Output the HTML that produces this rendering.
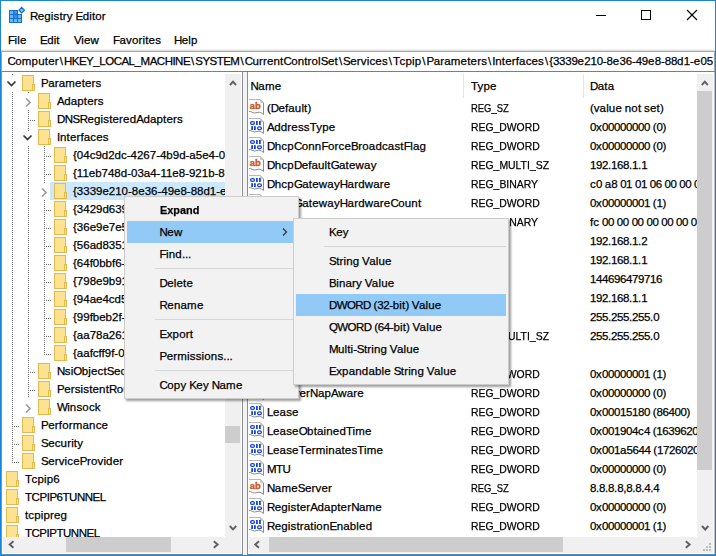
<!DOCTYPE html><html><head><meta charset="utf-8"><style>
html,body{margin:0;padding:0;background:#fff;}
#w{position:relative;width:716px;height:556px;overflow:hidden;background:#fff;font-family:"Liberation Sans",sans-serif;font-size:11.5px;color:#000;}
.t{position:absolute;white-space:nowrap;-webkit-text-stroke:0.25px #000;}
svg{position:absolute;left:0;top:0;}
</style></head><body><div id="w">
<div style="position:absolute;left:0px;top:0px;width:716px;height:1px;background:#1a84d8;"></div>
<div style="position:absolute;left:0px;top:0px;width:1px;height:556px;background:#1a84d8;"></div>
<div style="position:absolute;left:715px;top:0px;width:1px;height:556px;background:#1a84d8;"></div>
<div style="position:absolute;left:0px;top:555px;width:716px;height:1px;background:#1a84d8;"></div>
<svg width="30" height="30" style="left:0;top:0">
<path d="M9 10 H18 V14 H22 V23 H9 Z" fill="#1470d2"/>
<g fill="#6ab6f6">
<rect x="10" y="11" width="3" height="3"/><rect x="14" y="11" width="3" height="3" fill="#3d8ee0"/>
<rect x="10" y="15" width="3" height="3"/><rect x="14" y="15" width="3" height="3" fill="#3d8ee0"/><rect x="18" y="15" width="3" height="3"/>
<rect x="10" y="19" width="3" height="3"/><rect x="14" y="19" width="3" height="3"/><rect x="18" y="19" width="3" height="3"/>
</g>
<path d="M21.7 7.4 L24.5 10.2 L21.7 13 L18.9 10.2 Z" fill="#7cc0f8" stroke="#1466c8" stroke-width="1.1"/>
</svg>
<div class="t" style="left:30px;top:1px;height:30px;line-height:30px;"><span style="letter-spacing:-0.554px">R</span><span style="letter-spacing:0.150px">egistry</span><span style="letter-spacing:-0.407px"> </span><span style="letter-spacing:-0.512px">E</span><span style="letter-spacing:0.138px">ditor</span></div>
<svg width="716" height="31" style="left:0;top:0">
<line x1="596" y1="15.5" x2="606" y2="15.5" stroke="#000" stroke-width="1"/>
<rect x="641.5" y="10.5" width="9" height="9" fill="none" stroke="#000" stroke-width="1"/>
<path d="M687 10 L697 20 M697 10 L687 20" stroke="#000" stroke-width="1.1" fill="none"/>
</svg>
<div class="t" style="left:8px;top:31px;height:19px;line-height:19px;"><span style="letter-spacing:-0.469px">F</span><span style="letter-spacing:0.119px">ile</span></div>
<div class="t" style="left:40px;top:31px;height:19px;line-height:19px;"><span style="letter-spacing:-0.512px">E</span><span style="letter-spacing:0.125px">dit</span></div>
<div class="t" style="left:74px;top:31px;height:19px;line-height:19px;"><span style="letter-spacing:-0.512px">V</span><span style="letter-spacing:0.178px">iew</span></div>
<div class="t" style="left:113px;top:31px;height:19px;line-height:19px;"><span style="letter-spacing:-0.469px">F</span><span style="letter-spacing:0.156px">avorites</span></div>
<div class="t" style="left:174px;top:31px;height:19px;line-height:19px;"><span style="letter-spacing:-0.554px">H</span><span style="letter-spacing:0.158px">elp</span></div>
<div style="position:absolute;left:1px;top:49px;width:714px;height:1px;background:#f0f0f0;"></div>
<div style="position:absolute;left:1px;top:50px;width:714px;height:1px;background:#e3e3e3;"></div>
<div style="position:absolute;left:1px;top:51px;width:714px;height:21px;background:#fff;box-sizing:border-box;border:1px solid #a3a3a3;border-bottom-color:#7d7d7d;"></div>
<div class="t" style="left:7.5px;top:52px;height:19px;line-height:19px;width:705.5px;overflow:hidden;"><span style="letter-spacing:-0.554px">C</span><span style="letter-spacing:0.186px">omputer</span><span style="margin:0 1.009px">\</span><span style="letter-spacing:-0.522px">HKEY</span><span style="letter-spacing:-0.303px">_</span><span style="letter-spacing:-0.503px">LOCAL</span><span style="letter-spacing:-0.303px">_</span><span style="letter-spacing:-0.505px">MACHINE</span><span style="margin:0 1.009px">\</span><span style="letter-spacing:-0.526px">SYSTEM</span><span style="margin:0 1.009px">\</span><span style="letter-spacing:-0.554px">C</span><span style="letter-spacing:0.155px">urrent</span><span style="letter-spacing:-0.554px">C</span><span style="letter-spacing:0.148px">ontrol</span><span style="letter-spacing:-0.512px">S</span><span style="letter-spacing:0.148px">et</span><span style="margin:0 1.009px">\</span><span style="letter-spacing:-0.512px">S</span><span style="letter-spacing:0.161px">ervices</span><span style="margin:0 1.009px">\</span><span style="letter-spacing:-0.469px">T</span><span style="letter-spacing:0.163px">cpip</span><span style="margin:0 1.009px">\</span><span style="letter-spacing:-0.512px">P</span><span style="letter-spacing:0.178px">arameters</span><span style="margin:0 1.009px">\</span><span style="letter-spacing:-0.213px">I</span><span style="letter-spacing:0.162px">nterfaces</span><span style="margin:0 1.009px">\</span><span style="letter-spacing:-0.182px">{</span><span style="letter-spacing:-0.237px">3339</span><span style="letter-spacing:0.358px">e</span><span style="letter-spacing:-0.237px">210</span><span style="letter-spacing:-0.022px">-</span><span style="letter-spacing:-0.237px">8</span><span style="letter-spacing:0.358px">e</span><span style="letter-spacing:-0.237px">36</span><span style="letter-spacing:-0.022px">-</span><span style="letter-spacing:-0.237px">49</span><span style="letter-spacing:0.358px">e</span><span style="letter-spacing:-0.237px">8</span><span style="letter-spacing:-0.022px">-</span><span style="letter-spacing:-0.237px">88</span><span style="letter-spacing:0.358px">d</span><span style="letter-spacing:-0.237px">1</span><span style="letter-spacing:-0.022px">-</span><span style="letter-spacing:0.358px">e</span><span style="letter-spacing:-0.237px">05</span><span style="letter-spacing:0.358px">a</span><span style="letter-spacing:-0.237px">6</span><span style="letter-spacing:0.358px">b</span><span style="letter-spacing:-0.237px">7</span><span style="letter-spacing:0.338px">c</span><span style="letter-spacing:-0.237px">8</span><span style="letter-spacing:0.358px">d</span><span style="letter-spacing:-0.237px">9</span><span style="letter-spacing:0.358px">e</span><span style="letter-spacing:-0.022px">}</span></div>
<div style="position:absolute;left:1px;top:72px;width:1px;height:482px;background:#8b8e96;"></div>
<div style="position:absolute;left:242px;top:72px;width:1px;height:482px;background:#8b8e96;"></div>
<div style="position:absolute;left:1px;top:554px;width:242px;height:1px;background:#5a88b8;"></div>
<div style="position:absolute;left:243px;top:72px;width:4px;height:483px;background:#f3f3f3;"></div>
<div style="position:absolute;left:247px;top:72px;width:1px;height:482px;background:#8b8e96;"></div>
<div style="position:absolute;left:714px;top:72px;width:1px;height:482px;background:#b9bcc2;"></div>
<div style="position:absolute;left:247px;top:554px;width:468px;height:1px;background:#5a88b8;"></div>
<div style="position:absolute;left:3px;top:74px;width:222px;height:463px;overflow:hidden;background:#fff">
<div style="position:absolute;left:47px;top:108px;width:300px;height:18px;background:#cce8ff"></div>
<svg width="223" height="464" style="left:0;top:0"><g fill="#707070"><rect x="9" y="0" width="1" height="1"/><rect x="9" y="18" width="1" height="1"/><rect x="9" y="20" width="1" height="1"/><rect x="9" y="22" width="1" height="1"/><rect x="9" y="24" width="1" height="1"/><rect x="9" y="26" width="1" height="1"/><rect x="9" y="28" width="1" height="1"/><rect x="9" y="30" width="1" height="1"/><rect x="9" y="32" width="1" height="1"/><rect x="9" y="34" width="1" height="1"/><rect x="9" y="36" width="1" height="1"/><rect x="9" y="38" width="1" height="1"/><rect x="9" y="40" width="1" height="1"/><rect x="9" y="42" width="1" height="1"/><rect x="9" y="44" width="1" height="1"/><rect x="9" y="46" width="1" height="1"/><rect x="9" y="48" width="1" height="1"/><rect x="9" y="50" width="1" height="1"/><rect x="9" y="52" width="1" height="1"/><rect x="9" y="54" width="1" height="1"/><rect x="9" y="56" width="1" height="1"/><rect x="9" y="58" width="1" height="1"/><rect x="9" y="60" width="1" height="1"/><rect x="9" y="62" width="1" height="1"/><rect x="9" y="64" width="1" height="1"/><rect x="9" y="66" width="1" height="1"/><rect x="9" y="68" width="1" height="1"/><rect x="9" y="70" width="1" height="1"/><rect x="9" y="72" width="1" height="1"/><rect x="9" y="74" width="1" height="1"/><rect x="9" y="76" width="1" height="1"/><rect x="9" y="78" width="1" height="1"/><rect x="9" y="80" width="1" height="1"/><rect x="9" y="82" width="1" height="1"/><rect x="9" y="84" width="1" height="1"/><rect x="9" y="86" width="1" height="1"/><rect x="9" y="88" width="1" height="1"/><rect x="9" y="90" width="1" height="1"/><rect x="9" y="92" width="1" height="1"/><rect x="9" y="94" width="1" height="1"/><rect x="9" y="96" width="1" height="1"/><rect x="9" y="98" width="1" height="1"/><rect x="9" y="100" width="1" height="1"/><rect x="9" y="102" width="1" height="1"/><rect x="9" y="104" width="1" height="1"/><rect x="9" y="106" width="1" height="1"/><rect x="9" y="108" width="1" height="1"/><rect x="9" y="110" width="1" height="1"/><rect x="9" y="112" width="1" height="1"/><rect x="9" y="114" width="1" height="1"/><rect x="9" y="116" width="1" height="1"/><rect x="9" y="118" width="1" height="1"/><rect x="9" y="120" width="1" height="1"/><rect x="9" y="122" width="1" height="1"/><rect x="9" y="124" width="1" height="1"/><rect x="9" y="126" width="1" height="1"/><rect x="9" y="128" width="1" height="1"/><rect x="9" y="130" width="1" height="1"/><rect x="9" y="132" width="1" height="1"/><rect x="9" y="134" width="1" height="1"/><rect x="9" y="136" width="1" height="1"/><rect x="9" y="138" width="1" height="1"/><rect x="9" y="140" width="1" height="1"/><rect x="9" y="142" width="1" height="1"/><rect x="9" y="144" width="1" height="1"/><rect x="9" y="146" width="1" height="1"/><rect x="9" y="148" width="1" height="1"/><rect x="9" y="150" width="1" height="1"/><rect x="9" y="152" width="1" height="1"/><rect x="9" y="154" width="1" height="1"/><rect x="9" y="156" width="1" height="1"/><rect x="9" y="158" width="1" height="1"/><rect x="9" y="160" width="1" height="1"/><rect x="9" y="162" width="1" height="1"/><rect x="9" y="164" width="1" height="1"/><rect x="9" y="166" width="1" height="1"/><rect x="9" y="168" width="1" height="1"/><rect x="9" y="170" width="1" height="1"/><rect x="9" y="172" width="1" height="1"/><rect x="9" y="174" width="1" height="1"/><rect x="9" y="176" width="1" height="1"/><rect x="9" y="178" width="1" height="1"/><rect x="9" y="180" width="1" height="1"/><rect x="9" y="182" width="1" height="1"/><rect x="9" y="184" width="1" height="1"/><rect x="9" y="186" width="1" height="1"/><rect x="9" y="188" width="1" height="1"/><rect x="9" y="190" width="1" height="1"/><rect x="9" y="192" width="1" height="1"/><rect x="9" y="194" width="1" height="1"/><rect x="9" y="196" width="1" height="1"/><rect x="9" y="198" width="1" height="1"/><rect x="9" y="200" width="1" height="1"/><rect x="9" y="202" width="1" height="1"/><rect x="9" y="204" width="1" height="1"/><rect x="9" y="206" width="1" height="1"/><rect x="9" y="208" width="1" height="1"/><rect x="9" y="210" width="1" height="1"/><rect x="9" y="212" width="1" height="1"/><rect x="9" y="214" width="1" height="1"/><rect x="9" y="216" width="1" height="1"/><rect x="9" y="218" width="1" height="1"/><rect x="9" y="220" width="1" height="1"/><rect x="9" y="222" width="1" height="1"/><rect x="9" y="224" width="1" height="1"/><rect x="9" y="226" width="1" height="1"/><rect x="9" y="228" width="1" height="1"/><rect x="9" y="230" width="1" height="1"/><rect x="9" y="232" width="1" height="1"/><rect x="9" y="234" width="1" height="1"/><rect x="9" y="236" width="1" height="1"/><rect x="9" y="238" width="1" height="1"/><rect x="9" y="240" width="1" height="1"/><rect x="9" y="242" width="1" height="1"/><rect x="9" y="244" width="1" height="1"/><rect x="9" y="246" width="1" height="1"/><rect x="9" y="248" width="1" height="1"/><rect x="9" y="250" width="1" height="1"/><rect x="9" y="252" width="1" height="1"/><rect x="9" y="254" width="1" height="1"/><rect x="9" y="256" width="1" height="1"/><rect x="9" y="258" width="1" height="1"/><rect x="9" y="260" width="1" height="1"/><rect x="9" y="262" width="1" height="1"/><rect x="9" y="264" width="1" height="1"/><rect x="9" y="266" width="1" height="1"/><rect x="9" y="268" width="1" height="1"/><rect x="9" y="270" width="1" height="1"/><rect x="9" y="272" width="1" height="1"/><rect x="9" y="274" width="1" height="1"/><rect x="9" y="276" width="1" height="1"/><rect x="9" y="278" width="1" height="1"/><rect x="9" y="280" width="1" height="1"/><rect x="9" y="282" width="1" height="1"/><rect x="9" y="284" width="1" height="1"/><rect x="9" y="286" width="1" height="1"/><rect x="9" y="288" width="1" height="1"/><rect x="9" y="290" width="1" height="1"/><rect x="9" y="292" width="1" height="1"/><rect x="9" y="294" width="1" height="1"/><rect x="9" y="296" width="1" height="1"/><rect x="9" y="298" width="1" height="1"/><rect x="9" y="300" width="1" height="1"/><rect x="9" y="302" width="1" height="1"/><rect x="9" y="304" width="1" height="1"/><rect x="9" y="306" width="1" height="1"/><rect x="9" y="308" width="1" height="1"/><rect x="9" y="310" width="1" height="1"/><rect x="9" y="312" width="1" height="1"/><rect x="9" y="314" width="1" height="1"/><rect x="9" y="316" width="1" height="1"/><rect x="9" y="318" width="1" height="1"/><rect x="9" y="320" width="1" height="1"/><rect x="9" y="322" width="1" height="1"/><rect x="9" y="324" width="1" height="1"/><rect x="9" y="326" width="1" height="1"/><rect x="9" y="328" width="1" height="1"/><rect x="9" y="330" width="1" height="1"/><rect x="9" y="332" width="1" height="1"/><rect x="9" y="334" width="1" height="1"/><rect x="9" y="336" width="1" height="1"/><rect x="9" y="338" width="1" height="1"/><rect x="9" y="340" width="1" height="1"/><rect x="9" y="342" width="1" height="1"/><rect x="9" y="344" width="1" height="1"/><rect x="9" y="346" width="1" height="1"/><rect x="9" y="348" width="1" height="1"/><rect x="9" y="350" width="1" height="1"/><rect x="9" y="352" width="1" height="1"/><rect x="9" y="354" width="1" height="1"/><rect x="9" y="356" width="1" height="1"/><rect x="9" y="358" width="1" height="1"/><rect x="9" y="360" width="1" height="1"/><rect x="9" y="362" width="1" height="1"/><rect x="9" y="364" width="1" height="1"/><rect x="9" y="366" width="1" height="1"/><rect x="9" y="368" width="1" height="1"/><rect x="9" y="370" width="1" height="1"/><rect x="9" y="372" width="1" height="1"/><rect x="9" y="374" width="1" height="1"/><rect x="9" y="376" width="1" height="1"/><rect x="9" y="378" width="1" height="1"/><rect x="9" y="380" width="1" height="1"/><rect x="9" y="382" width="1" height="1"/><rect x="9" y="384" width="1" height="1"/><rect x="9" y="386" width="1" height="1"/><rect x="25" y="18" width="1" height="1"/><rect x="25" y="36" width="1" height="1"/><rect x="25" y="38" width="1" height="1"/><rect x="25" y="40" width="1" height="1"/><rect x="25" y="42" width="1" height="1"/><rect x="25" y="44" width="1" height="1"/><rect x="25" y="46" width="1" height="1"/><rect x="25" y="48" width="1" height="1"/><rect x="25" y="50" width="1" height="1"/><rect x="25" y="52" width="1" height="1"/><rect x="25" y="54" width="1" height="1"/><rect x="25" y="56" width="1" height="1"/><rect x="25" y="72" width="1" height="1"/><rect x="25" y="74" width="1" height="1"/><rect x="25" y="76" width="1" height="1"/><rect x="25" y="78" width="1" height="1"/><rect x="25" y="80" width="1" height="1"/><rect x="25" y="82" width="1" height="1"/><rect x="25" y="84" width="1" height="1"/><rect x="25" y="86" width="1" height="1"/><rect x="25" y="88" width="1" height="1"/><rect x="25" y="90" width="1" height="1"/><rect x="25" y="92" width="1" height="1"/><rect x="25" y="94" width="1" height="1"/><rect x="25" y="96" width="1" height="1"/><rect x="25" y="98" width="1" height="1"/><rect x="25" y="100" width="1" height="1"/><rect x="25" y="102" width="1" height="1"/><rect x="25" y="104" width="1" height="1"/><rect x="25" y="106" width="1" height="1"/><rect x="25" y="108" width="1" height="1"/><rect x="25" y="110" width="1" height="1"/><rect x="25" y="112" width="1" height="1"/><rect x="25" y="114" width="1" height="1"/><rect x="25" y="116" width="1" height="1"/><rect x="25" y="118" width="1" height="1"/><rect x="25" y="120" width="1" height="1"/><rect x="25" y="122" width="1" height="1"/><rect x="25" y="124" width="1" height="1"/><rect x="25" y="126" width="1" height="1"/><rect x="25" y="128" width="1" height="1"/><rect x="25" y="130" width="1" height="1"/><rect x="25" y="132" width="1" height="1"/><rect x="25" y="134" width="1" height="1"/><rect x="25" y="136" width="1" height="1"/><rect x="25" y="138" width="1" height="1"/><rect x="25" y="140" width="1" height="1"/><rect x="25" y="142" width="1" height="1"/><rect x="25" y="144" width="1" height="1"/><rect x="25" y="146" width="1" height="1"/><rect x="25" y="148" width="1" height="1"/><rect x="25" y="150" width="1" height="1"/><rect x="25" y="152" width="1" height="1"/><rect x="25" y="154" width="1" height="1"/><rect x="25" y="156" width="1" height="1"/><rect x="25" y="158" width="1" height="1"/><rect x="25" y="160" width="1" height="1"/><rect x="25" y="162" width="1" height="1"/><rect x="25" y="164" width="1" height="1"/><rect x="25" y="166" width="1" height="1"/><rect x="25" y="168" width="1" height="1"/><rect x="25" y="170" width="1" height="1"/><rect x="25" y="172" width="1" height="1"/><rect x="25" y="174" width="1" height="1"/><rect x="25" y="176" width="1" height="1"/><rect x="25" y="178" width="1" height="1"/><rect x="25" y="180" width="1" height="1"/><rect x="25" y="182" width="1" height="1"/><rect x="25" y="184" width="1" height="1"/><rect x="25" y="186" width="1" height="1"/><rect x="25" y="188" width="1" height="1"/><rect x="25" y="190" width="1" height="1"/><rect x="25" y="192" width="1" height="1"/><rect x="25" y="194" width="1" height="1"/><rect x="25" y="196" width="1" height="1"/><rect x="25" y="198" width="1" height="1"/><rect x="25" y="200" width="1" height="1"/><rect x="25" y="202" width="1" height="1"/><rect x="25" y="204" width="1" height="1"/><rect x="25" y="206" width="1" height="1"/><rect x="25" y="208" width="1" height="1"/><rect x="25" y="210" width="1" height="1"/><rect x="25" y="212" width="1" height="1"/><rect x="25" y="214" width="1" height="1"/><rect x="25" y="216" width="1" height="1"/><rect x="25" y="218" width="1" height="1"/><rect x="25" y="220" width="1" height="1"/><rect x="25" y="222" width="1" height="1"/><rect x="25" y="224" width="1" height="1"/><rect x="25" y="226" width="1" height="1"/><rect x="25" y="228" width="1" height="1"/><rect x="25" y="230" width="1" height="1"/><rect x="25" y="232" width="1" height="1"/><rect x="25" y="234" width="1" height="1"/><rect x="25" y="236" width="1" height="1"/><rect x="25" y="238" width="1" height="1"/><rect x="25" y="240" width="1" height="1"/><rect x="25" y="242" width="1" height="1"/><rect x="25" y="244" width="1" height="1"/><rect x="25" y="246" width="1" height="1"/><rect x="25" y="248" width="1" height="1"/><rect x="25" y="250" width="1" height="1"/><rect x="25" y="252" width="1" height="1"/><rect x="25" y="254" width="1" height="1"/><rect x="25" y="256" width="1" height="1"/><rect x="25" y="258" width="1" height="1"/><rect x="25" y="260" width="1" height="1"/><rect x="25" y="262" width="1" height="1"/><rect x="25" y="264" width="1" height="1"/><rect x="25" y="266" width="1" height="1"/><rect x="25" y="268" width="1" height="1"/><rect x="25" y="270" width="1" height="1"/><rect x="25" y="272" width="1" height="1"/><rect x="25" y="274" width="1" height="1"/><rect x="25" y="276" width="1" height="1"/><rect x="25" y="278" width="1" height="1"/><rect x="25" y="280" width="1" height="1"/><rect x="25" y="282" width="1" height="1"/><rect x="25" y="284" width="1" height="1"/><rect x="25" y="286" width="1" height="1"/><rect x="25" y="288" width="1" height="1"/><rect x="25" y="290" width="1" height="1"/><rect x="25" y="292" width="1" height="1"/><rect x="25" y="294" width="1" height="1"/><rect x="25" y="296" width="1" height="1"/><rect x="25" y="298" width="1" height="1"/><rect x="25" y="300" width="1" height="1"/><rect x="25" y="302" width="1" height="1"/><rect x="25" y="304" width="1" height="1"/><rect x="25" y="306" width="1" height="1"/><rect x="25" y="308" width="1" height="1"/><rect x="25" y="310" width="1" height="1"/><rect x="25" y="312" width="1" height="1"/><rect x="25" y="314" width="1" height="1"/><rect x="25" y="316" width="1" height="1"/><rect x="25" y="318" width="1" height="1"/><rect x="25" y="320" width="1" height="1"/><rect x="25" y="322" width="1" height="1"/><rect x="41" y="72" width="1" height="1"/><rect x="41" y="74" width="1" height="1"/><rect x="41" y="76" width="1" height="1"/><rect x="41" y="78" width="1" height="1"/><rect x="41" y="80" width="1" height="1"/><rect x="41" y="82" width="1" height="1"/><rect x="41" y="84" width="1" height="1"/><rect x="41" y="86" width="1" height="1"/><rect x="41" y="88" width="1" height="1"/><rect x="41" y="90" width="1" height="1"/><rect x="41" y="92" width="1" height="1"/><rect x="41" y="94" width="1" height="1"/><rect x="41" y="96" width="1" height="1"/><rect x="41" y="98" width="1" height="1"/><rect x="41" y="100" width="1" height="1"/><rect x="41" y="102" width="1" height="1"/><rect x="41" y="104" width="1" height="1"/><rect x="41" y="106" width="1" height="1"/><rect x="41" y="108" width="1" height="1"/><rect x="41" y="126" width="1" height="1"/><rect x="41" y="128" width="1" height="1"/><rect x="41" y="130" width="1" height="1"/><rect x="41" y="132" width="1" height="1"/><rect x="41" y="134" width="1" height="1"/><rect x="41" y="136" width="1" height="1"/><rect x="41" y="138" width="1" height="1"/><rect x="41" y="140" width="1" height="1"/><rect x="41" y="142" width="1" height="1"/><rect x="41" y="144" width="1" height="1"/><rect x="41" y="146" width="1" height="1"/><rect x="41" y="148" width="1" height="1"/><rect x="41" y="150" width="1" height="1"/><rect x="41" y="152" width="1" height="1"/><rect x="41" y="154" width="1" height="1"/><rect x="41" y="156" width="1" height="1"/><rect x="41" y="158" width="1" height="1"/><rect x="41" y="160" width="1" height="1"/><rect x="41" y="162" width="1" height="1"/><rect x="41" y="164" width="1" height="1"/><rect x="41" y="166" width="1" height="1"/><rect x="41" y="168" width="1" height="1"/><rect x="41" y="170" width="1" height="1"/><rect x="41" y="172" width="1" height="1"/><rect x="41" y="174" width="1" height="1"/><rect x="41" y="176" width="1" height="1"/><rect x="41" y="178" width="1" height="1"/><rect x="41" y="180" width="1" height="1"/><rect x="41" y="182" width="1" height="1"/><rect x="41" y="184" width="1" height="1"/><rect x="41" y="186" width="1" height="1"/><rect x="41" y="188" width="1" height="1"/><rect x="41" y="190" width="1" height="1"/><rect x="41" y="192" width="1" height="1"/><rect x="41" y="194" width="1" height="1"/><rect x="41" y="196" width="1" height="1"/><rect x="41" y="198" width="1" height="1"/><rect x="41" y="200" width="1" height="1"/><rect x="41" y="202" width="1" height="1"/><rect x="41" y="204" width="1" height="1"/><rect x="41" y="206" width="1" height="1"/><rect x="41" y="208" width="1" height="1"/><rect x="41" y="210" width="1" height="1"/><rect x="41" y="212" width="1" height="1"/><rect x="41" y="214" width="1" height="1"/><rect x="41" y="216" width="1" height="1"/><rect x="41" y="218" width="1" height="1"/><rect x="41" y="220" width="1" height="1"/><rect x="41" y="222" width="1" height="1"/><rect x="41" y="224" width="1" height="1"/><rect x="41" y="226" width="1" height="1"/><rect x="41" y="228" width="1" height="1"/><rect x="41" y="230" width="1" height="1"/><rect x="41" y="232" width="1" height="1"/><rect x="41" y="234" width="1" height="1"/><rect x="41" y="236" width="1" height="1"/><rect x="41" y="238" width="1" height="1"/><rect x="41" y="240" width="1" height="1"/><rect x="41" y="242" width="1" height="1"/><rect x="41" y="244" width="1" height="1"/><rect x="41" y="246" width="1" height="1"/><rect x="41" y="248" width="1" height="1"/><rect x="41" y="250" width="1" height="1"/><rect x="41" y="252" width="1" height="1"/><rect x="41" y="254" width="1" height="1"/><rect x="41" y="256" width="1" height="1"/><rect x="41" y="258" width="1" height="1"/><rect x="41" y="260" width="1" height="1"/><rect x="41" y="262" width="1" height="1"/><rect x="41" y="264" width="1" height="1"/><rect x="41" y="266" width="1" height="1"/><rect x="41" y="268" width="1" height="1"/><rect x="41" y="270" width="1" height="1"/><rect x="41" y="272" width="1" height="1"/><rect x="41" y="274" width="1" height="1"/><rect x="41" y="276" width="1" height="1"/><rect x="41" y="278" width="1" height="1"/><rect x="25" y="46" width="1" height="1"/><rect x="27" y="46" width="1" height="1"/><rect x="29" y="46" width="1" height="1"/><rect x="31" y="46" width="1" height="1"/><rect x="41" y="82" width="1" height="1"/><rect x="43" y="82" width="1" height="1"/><rect x="45" y="82" width="1" height="1"/><rect x="47" y="82" width="1" height="1"/><rect x="41" y="100" width="1" height="1"/><rect x="43" y="100" width="1" height="1"/><rect x="45" y="100" width="1" height="1"/><rect x="47" y="100" width="1" height="1"/><rect x="41" y="136" width="1" height="1"/><rect x="43" y="136" width="1" height="1"/><rect x="45" y="136" width="1" height="1"/><rect x="47" y="136" width="1" height="1"/><rect x="41" y="154" width="1" height="1"/><rect x="43" y="154" width="1" height="1"/><rect x="45" y="154" width="1" height="1"/><rect x="47" y="154" width="1" height="1"/><rect x="41" y="172" width="1" height="1"/><rect x="43" y="172" width="1" height="1"/><rect x="45" y="172" width="1" height="1"/><rect x="47" y="172" width="1" height="1"/><rect x="41" y="190" width="1" height="1"/><rect x="43" y="190" width="1" height="1"/><rect x="45" y="190" width="1" height="1"/><rect x="47" y="190" width="1" height="1"/><rect x="41" y="208" width="1" height="1"/><rect x="43" y="208" width="1" height="1"/><rect x="45" y="208" width="1" height="1"/><rect x="47" y="208" width="1" height="1"/><rect x="41" y="226" width="1" height="1"/><rect x="43" y="226" width="1" height="1"/><rect x="45" y="226" width="1" height="1"/><rect x="47" y="226" width="1" height="1"/><rect x="41" y="244" width="1" height="1"/><rect x="43" y="244" width="1" height="1"/><rect x="45" y="244" width="1" height="1"/><rect x="47" y="244" width="1" height="1"/><rect x="41" y="262" width="1" height="1"/><rect x="43" y="262" width="1" height="1"/><rect x="45" y="262" width="1" height="1"/><rect x="47" y="262" width="1" height="1"/><rect x="41" y="280" width="1" height="1"/><rect x="43" y="280" width="1" height="1"/><rect x="45" y="280" width="1" height="1"/><rect x="47" y="280" width="1" height="1"/><rect x="25" y="298" width="1" height="1"/><rect x="27" y="298" width="1" height="1"/><rect x="29" y="298" width="1" height="1"/><rect x="31" y="298" width="1" height="1"/><rect x="25" y="316" width="1" height="1"/><rect x="27" y="316" width="1" height="1"/><rect x="29" y="316" width="1" height="1"/><rect x="31" y="316" width="1" height="1"/><rect x="9" y="352" width="1" height="1"/><rect x="11" y="352" width="1" height="1"/><rect x="13" y="352" width="1" height="1"/><rect x="15" y="352" width="1" height="1"/><rect x="9" y="370" width="1" height="1"/><rect x="11" y="370" width="1" height="1"/><rect x="13" y="370" width="1" height="1"/><rect x="15" y="370" width="1" height="1"/><rect x="9" y="388" width="1" height="1"/><rect x="11" y="388" width="1" height="1"/><rect x="13" y="388" width="1" height="1"/><rect x="15" y="388" width="1" height="1"/></g><rect x="19.5" y="1.5" width="11" height="15" fill="#fce391" stroke="#e4bb4a"/><rect x="29.5" y="10.5" width="2" height="6" fill="#fce391" stroke="#e4bb4a"/><path d="M4.5 7.5 L8.5 11.5 L12.5 7.5" fill="none" stroke="#3a3a3a" stroke-width="1.75"/><rect x="35.5" y="19.5" width="11" height="15" fill="#fce391" stroke="#e4bb4a"/><rect x="45.5" y="28.5" width="2" height="6" fill="#fce391" stroke="#e4bb4a"/><path d="M23.0 24.5 L27.0 28.5 L23.0 32.5" fill="none" stroke="#9c9c9c" stroke-width="1.75"/><rect x="35.5" y="37.5" width="11" height="15" fill="#fce391" stroke="#e4bb4a"/><rect x="45.5" y="46.5" width="2" height="6" fill="#fce391" stroke="#e4bb4a"/><rect x="35.5" y="55.5" width="11" height="15" fill="#fce391" stroke="#e4bb4a"/><rect x="45.5" y="64.5" width="2" height="6" fill="#fce391" stroke="#e4bb4a"/><path d="M20.5 61.5 L24.5 65.5 L28.5 61.5" fill="none" stroke="#3a3a3a" stroke-width="1.75"/><rect x="51.5" y="73.5" width="11" height="15" fill="#fce391" stroke="#e4bb4a"/><rect x="61.5" y="82.5" width="2" height="6" fill="#fce391" stroke="#e4bb4a"/><rect x="51.5" y="91.5" width="11" height="15" fill="#fce391" stroke="#e4bb4a"/><rect x="61.5" y="100.5" width="2" height="6" fill="#fce391" stroke="#e4bb4a"/><rect x="51.5" y="109.5" width="11" height="15" fill="#fce391" stroke="#e4bb4a"/><rect x="61.5" y="118.5" width="2" height="6" fill="#fce391" stroke="#e4bb4a"/><path d="M39.0 114.5 L43.0 118.5 L39.0 122.5" fill="none" stroke="#9c9c9c" stroke-width="1.75"/><rect x="51.5" y="127.5" width="11" height="15" fill="#fce391" stroke="#e4bb4a"/><rect x="61.5" y="136.5" width="2" height="6" fill="#fce391" stroke="#e4bb4a"/><rect x="51.5" y="145.5" width="11" height="15" fill="#fce391" stroke="#e4bb4a"/><rect x="61.5" y="154.5" width="2" height="6" fill="#fce391" stroke="#e4bb4a"/><rect x="51.5" y="163.5" width="11" height="15" fill="#fce391" stroke="#e4bb4a"/><rect x="61.5" y="172.5" width="2" height="6" fill="#fce391" stroke="#e4bb4a"/><rect x="51.5" y="181.5" width="11" height="15" fill="#fce391" stroke="#e4bb4a"/><rect x="61.5" y="190.5" width="2" height="6" fill="#fce391" stroke="#e4bb4a"/><rect x="51.5" y="199.5" width="11" height="15" fill="#fce391" stroke="#e4bb4a"/><rect x="61.5" y="208.5" width="2" height="6" fill="#fce391" stroke="#e4bb4a"/><rect x="51.5" y="217.5" width="11" height="15" fill="#fce391" stroke="#e4bb4a"/><rect x="61.5" y="226.5" width="2" height="6" fill="#fce391" stroke="#e4bb4a"/><rect x="51.5" y="235.5" width="11" height="15" fill="#fce391" stroke="#e4bb4a"/><rect x="61.5" y="244.5" width="2" height="6" fill="#fce391" stroke="#e4bb4a"/><rect x="51.5" y="253.5" width="11" height="15" fill="#fce391" stroke="#e4bb4a"/><rect x="61.5" y="262.5" width="2" height="6" fill="#fce391" stroke="#e4bb4a"/><rect x="51.5" y="271.5" width="11" height="15" fill="#fce391" stroke="#e4bb4a"/><rect x="61.5" y="280.5" width="2" height="6" fill="#fce391" stroke="#e4bb4a"/><rect x="35.5" y="289.5" width="11" height="15" fill="#fce391" stroke="#e4bb4a"/><rect x="45.5" y="298.5" width="2" height="6" fill="#fce391" stroke="#e4bb4a"/><rect x="35.5" y="307.5" width="11" height="15" fill="#fce391" stroke="#e4bb4a"/><rect x="45.5" y="316.5" width="2" height="6" fill="#fce391" stroke="#e4bb4a"/><rect x="35.5" y="325.5" width="11" height="15" fill="#fce391" stroke="#e4bb4a"/><rect x="45.5" y="334.5" width="2" height="6" fill="#fce391" stroke="#e4bb4a"/><path d="M23.0 330.5 L27.0 334.5 L23.0 338.5" fill="none" stroke="#9c9c9c" stroke-width="1.75"/><rect x="19.5" y="343.5" width="11" height="15" fill="#fce391" stroke="#e4bb4a"/><rect x="29.5" y="352.5" width="2" height="6" fill="#fce391" stroke="#e4bb4a"/><rect x="19.5" y="361.5" width="11" height="15" fill="#fce391" stroke="#e4bb4a"/><rect x="29.5" y="370.5" width="2" height="6" fill="#fce391" stroke="#e4bb4a"/><rect x="19.5" y="379.5" width="11" height="15" fill="#fce391" stroke="#e4bb4a"/><rect x="29.5" y="388.5" width="2" height="6" fill="#fce391" stroke="#e4bb4a"/><rect x="3.5" y="397.5" width="11" height="15" fill="#fce391" stroke="#e4bb4a"/><rect x="13.5" y="406.5" width="2" height="6" fill="#fce391" stroke="#e4bb4a"/><rect x="3.5" y="415.5" width="11" height="15" fill="#fce391" stroke="#e4bb4a"/><rect x="13.5" y="424.5" width="2" height="6" fill="#fce391" stroke="#e4bb4a"/><rect x="3.5" y="433.5" width="11" height="15" fill="#fce391" stroke="#e4bb4a"/><rect x="13.5" y="442.5" width="2" height="6" fill="#fce391" stroke="#e4bb4a"/><rect x="3.5" y="451.5" width="11" height="15" fill="#fce391" stroke="#e4bb4a"/><rect x="13.5" y="460.5" width="2" height="6" fill="#fce391" stroke="#e4bb4a"/></svg>
<div class="t" style="left:38px;top:0px;height:18px;line-height:18px"><span style="letter-spacing:-0.512px">P</span><span style="letter-spacing:0.178px">arameters</span></div>
<div class="t" style="left:54px;top:18px;height:18px;line-height:18px"><span style="letter-spacing:-0.512px">A</span><span style="letter-spacing:0.169px">dapters</span></div>
<div class="t" style="left:54px;top:36px;height:18px;line-height:18px"><span style="letter-spacing:-0.543px">DNSR</span><span style="letter-spacing:0.162px">egistered</span><span style="letter-spacing:-0.512px">A</span><span style="letter-spacing:0.169px">dapters</span></div>
<div class="t" style="left:54px;top:54px;height:18px;line-height:18px"><span style="letter-spacing:-0.213px">I</span><span style="letter-spacing:0.162px">nterfaces</span></div>
<div class="t" style="left:70px;top:72px;height:18px;line-height:18px">{04c9d2dc-4267-4b9d-a5e4-0a0b1c2d3e4f}</div>
<div class="t" style="left:70px;top:90px;height:18px;line-height:18px">{11eb748d-03a4-11e8-921b-806e6f6e6963}</div>
<div class="t" style="left:70px;top:108px;height:18px;line-height:18px">{3339e210-8e36-49e8-88d1-e05a6b7c8d9e}</div>
<div class="t" style="left:70px;top:126px;height:18px;line-height:18px">{3429d639-0000-0000-0000-000000000000}</div>
<div class="t" style="left:70px;top:144px;height:18px;line-height:18px">{36e9e7e5-0000-0000-0000-000000000000}</div>
<div class="t" style="left:70px;top:162px;height:18px;line-height:18px">{56ad8351-0000-0000-0000-000000000000}</div>
<div class="t" style="left:70px;top:180px;height:18px;line-height:18px">{64f0bbf6-0000-0000-0000-000000000000}</div>
<div class="t" style="left:70px;top:198px;height:18px;line-height:18px">{798e9b91-0000-0000-0000-000000000000}</div>
<div class="t" style="left:70px;top:216px;height:18px;line-height:18px">{94ae4cd5-0000-0000-0000-000000000000}</div>
<div class="t" style="left:70px;top:234px;height:18px;line-height:18px">{99fbeb2f-0000-0000-0000-000000000000}</div>
<div class="t" style="left:70px;top:252px;height:18px;line-height:18px">{aa78a261-0000-0000-0000-000000000000}</div>
<div class="t" style="left:70px;top:270px;height:18px;line-height:18px">{aafcff9f-0000-0000-0000-000000000000}</div>
<div class="t" style="left:54px;top:288px;height:18px;line-height:18px"><span style="letter-spacing:-0.554px">N</span><span style="letter-spacing:0.128px">si</span><span style="letter-spacing:-0.597px">O</span><span style="letter-spacing:0.150px">bject</span><span style="letter-spacing:-0.512px">S</span><span style="letter-spacing:0.150px">ecurity</span></div>
<div class="t" style="left:54px;top:306px;height:18px;line-height:18px"><span style="letter-spacing:-0.512px">P</span><span style="letter-spacing:0.149px">ersistent</span><span style="letter-spacing:-0.554px">R</span><span style="letter-spacing:0.174px">outes</span></div>
<div class="t" style="left:54px;top:324px;height:18px;line-height:18px"><span style="letter-spacing:-0.724px">W</span><span style="letter-spacing:0.168px">insock</span></div>
<div class="t" style="left:38px;top:342px;height:18px;line-height:18px"><span style="letter-spacing:-0.512px">P</span><span style="letter-spacing:0.180px">erformance</span></div>
<div class="t" style="left:38px;top:360px;height:18px;line-height:18px"><span style="letter-spacing:-0.512px">S</span><span style="letter-spacing:0.150px">ecurity</span></div>
<div class="t" style="left:38px;top:378px;height:18px;line-height:18px"><span style="letter-spacing:-0.512px">S</span><span style="letter-spacing:0.158px">ervice</span><span style="letter-spacing:-0.512px">P</span><span style="letter-spacing:0.155px">rovider</span></div>
<div class="t" style="left:22px;top:396px;height:18px;line-height:18px"><span style="letter-spacing:-0.469px">T</span><span style="letter-spacing:0.163px">cpip</span><span style="letter-spacing:-0.397px">6</span></div>
<div class="t" style="left:22px;top:414px;height:18px;line-height:18px"><span style="letter-spacing:-0.452px">TCPIP</span><span style="letter-spacing:-0.397px">6</span><span style="letter-spacing:-0.511px">TUNNEL</span></div>
<div class="t" style="left:22px;top:432px;height:18px;line-height:18px"><span style="letter-spacing:0.158px">tcpipreg</span></div>
<div class="t" style="left:22px;top:450px;height:18px;line-height:18px"><span style="letter-spacing:-0.484px">TCPIPTUNNEL</span></div>
</div>
<div style="position:absolute;left:225px;top:74px;width:16px;height:463px;background:#f0f0f0;"></div>
<div style="position:absolute;left:225px;top:426px;width:15px;height:17px;background:#cdcdcd;"></div>
<div style="position:absolute;left:3px;top:537px;width:222px;height:16px;background:#f0f0f0;"></div>
<div style="position:absolute;left:66px;top:537px;width:105px;height:15px;background:#cdcdcd;"></div>
<div style="position:absolute;left:225px;top:537px;width:16px;height:16px;background:#f0f0f0;"></div>
<svg width="716" height="556" style="left:0;top:0"><g fill="none" stroke="#606060" stroke-width="1.9">
<path d="M230 85 L233 81.7 L236 85"/>
<path d="M229.8 526 L233 529.3 L236.2 526"/>
<path d="M13.5 541.3 L9.7 544.5 L13.5 547.7"/>
<path d="M213.8 541.3 L217.6 544.5 L213.8 547.7"/>
</g></svg>
<div style="position:absolute;left:249px;top:74px;width:448px;height:463px;overflow:hidden;background:#fff">
<div class="t" style="left:1.5px;top:0px;height:25px;line-height:25px"><span style="letter-spacing:-0.554px">N</span><span style="letter-spacing:0.230px">ame</span></div>
<div class="t" style="left:222px;top:0px;height:25px;line-height:25px"><span style="letter-spacing:-0.469px">T</span><span style="letter-spacing:0.191px">ype</span></div>
<div class="t" style="left:341px;top:0px;height:25px;line-height:25px"><span style="letter-spacing:-0.554px">D</span><span style="letter-spacing:0.165px">ata</span></div>
<div style="position:absolute;left:214px;top:0px;width:1px;height:24px;background:#e5e5e5"></div>
<div style="position:absolute;left:334px;top:0px;width:1px;height:24px;background:#e5e5e5"></div>
<div class="t" style="left:18px;top:25px;height:19px;line-height:19px"><span style="letter-spacing:-0.182px">(</span><span style="letter-spacing:-0.554px">D</span><span style="letter-spacing:0.145px">efault</span><span style="letter-spacing:-0.182px">)</span></div>
<div class="t" style="left:222px;top:25px;height:19px;line-height:19px"><span style="display:inline-block;transform:scaleX(0.8215);transform-origin:0 0">REG_SZ</span></div>
<div class="t" style="left:341px;top:25px;height:19px;line-height:19px;width:107px;overflow:hidden"><span style="letter-spacing:-0.182px">(</span><span style="letter-spacing:0.170px">value</span><span style="letter-spacing:-0.407px"> </span><span style="letter-spacing:0.165px">not</span><span style="letter-spacing:-0.407px"> </span><span style="letter-spacing:0.158px">set</span><span style="letter-spacing:-0.182px">)</span></div>
<div class="t" style="left:18px;top:44px;height:19px;line-height:19px"><span style="letter-spacing:-0.512px">A</span><span style="letter-spacing:0.178px">ddress</span><span style="letter-spacing:-0.469px">T</span><span style="letter-spacing:0.191px">ype</span></div>
<div class="t" style="left:222px;top:44px;height:19px;line-height:19px"><span style="display:inline-block;transform:scaleX(0.9036);transform-origin:0 0">REG_DWORD</span></div>
<div class="t" style="left:341px;top:44px;height:19px;line-height:19px;width:107px;overflow:hidden"><span style="letter-spacing:-0.397px">0</span><span style="letter-spacing:0.178px">x</span><span style="letter-spacing:-0.397px">00000000</span><span style="letter-spacing:-0.407px"> </span><span style="letter-spacing:-0.182px">(</span><span style="letter-spacing:-0.397px">0</span><span style="letter-spacing:-0.182px">)</span></div>
<div class="t" style="left:18px;top:63px;height:19px;line-height:19px"><span style="letter-spacing:-0.554px">D</span><span style="letter-spacing:0.191px">hcp</span><span style="letter-spacing:-0.554px">C</span><span style="letter-spacing:0.198px">onn</span><span style="letter-spacing:-0.469px">F</span><span style="letter-spacing:0.173px">orce</span><span style="letter-spacing:-0.512px">B</span><span style="letter-spacing:0.170px">roadcast</span><span style="letter-spacing:-0.469px">F</span><span style="letter-spacing:0.158px">lag</span></div>
<div class="t" style="left:222px;top:63px;height:19px;line-height:19px"><span style="display:inline-block;transform:scaleX(0.9036);transform-origin:0 0">REG_DWORD</span></div>
<div class="t" style="left:341px;top:63px;height:19px;line-height:19px;width:107px;overflow:hidden"><span style="letter-spacing:-0.397px">0</span><span style="letter-spacing:0.178px">x</span><span style="letter-spacing:-0.397px">00000000</span><span style="letter-spacing:-0.407px"> </span><span style="letter-spacing:-0.182px">(</span><span style="letter-spacing:-0.397px">0</span><span style="letter-spacing:-0.182px">)</span></div>
<div class="t" style="left:18px;top:82px;height:19px;line-height:19px"><span style="letter-spacing:-0.554px">D</span><span style="letter-spacing:0.191px">hcp</span><span style="letter-spacing:-0.554px">D</span><span style="letter-spacing:0.145px">efault</span><span style="letter-spacing:-0.597px">G</span><span style="letter-spacing:0.188px">ateway</span></div>
<div class="t" style="left:222px;top:82px;height:19px;line-height:19px"><span style="display:inline-block;transform:scaleX(0.9064);transform-origin:0 0">REG_MULTI_SZ</span></div>
<div class="t" style="left:341px;top:82px;height:19px;line-height:19px;width:107px;overflow:hidden"><span style="letter-spacing:-0.397px">192</span><span style="letter-spacing:-0.151px">.</span><span style="letter-spacing:-0.397px">168</span><span style="letter-spacing:-0.151px">.</span><span style="letter-spacing:-0.397px">1</span><span style="letter-spacing:-0.151px">.</span><span style="letter-spacing:-0.397px">1</span></div>
<div class="t" style="left:18px;top:101px;height:19px;line-height:19px"><span style="letter-spacing:-0.554px">D</span><span style="letter-spacing:0.191px">hcp</span><span style="letter-spacing:-0.597px">G</span><span style="letter-spacing:0.188px">ateway</span><span style="letter-spacing:-0.554px">H</span><span style="letter-spacing:0.183px">ardware</span></div>
<div class="t" style="left:222px;top:101px;height:19px;line-height:19px"><span style="display:inline-block;transform:scaleX(0.9063);transform-origin:0 0">REG_BINARY</span></div>
<div class="t" style="left:341px;top:101px;height:19px;line-height:19px;width:107px;overflow:hidden"><span style="letter-spacing:0.178px">c</span><span style="letter-spacing:-0.397px">0</span><span style="letter-spacing:-0.407px"> </span><span style="letter-spacing:0.198px">a</span><span style="letter-spacing:-0.397px">8</span><span style="letter-spacing:-0.407px"> </span><span style="letter-spacing:-0.397px">01</span><span style="letter-spacing:-0.407px"> </span><span style="letter-spacing:-0.397px">01</span><span style="letter-spacing:-0.407px"> </span><span style="letter-spacing:-0.397px">06</span><span style="letter-spacing:-0.407px"> </span><span style="letter-spacing:-0.397px">00</span><span style="letter-spacing:-0.407px"> </span><span style="letter-spacing:-0.397px">00</span><span style="letter-spacing:-0.407px"> </span><span style="letter-spacing:-0.397px">00</span><span style="letter-spacing:-0.407px"> </span><span style="letter-spacing:-0.397px">00</span><span style="letter-spacing:-0.407px"> </span><span style="letter-spacing:-0.397px">00</span></div>
<div class="t" style="left:18px;top:120px;height:19px;line-height:19px"><span style="letter-spacing:-0.554px">D</span><span style="letter-spacing:0.191px">hcp</span><span style="letter-spacing:-0.597px">G</span><span style="letter-spacing:0.188px">ateway</span><span style="letter-spacing:-0.554px">H</span><span style="letter-spacing:0.183px">ardware</span><span style="letter-spacing:-0.554px">C</span><span style="letter-spacing:0.173px">ount</span></div>
<div class="t" style="left:222px;top:120px;height:19px;line-height:19px"><span style="display:inline-block;transform:scaleX(0.9036);transform-origin:0 0">REG_DWORD</span></div>
<div class="t" style="left:341px;top:120px;height:19px;line-height:19px;width:107px;overflow:hidden"><span style="letter-spacing:-0.397px">0</span><span style="letter-spacing:0.178px">x</span><span style="letter-spacing:-0.397px">00000001</span><span style="letter-spacing:-0.407px"> </span><span style="letter-spacing:-0.182px">(</span><span style="letter-spacing:-0.397px">1</span><span style="letter-spacing:-0.182px">)</span></div>
<div class="t" style="left:18px;top:139px;height:19px;line-height:19px"><span style="letter-spacing:-0.554px">D</span><span style="letter-spacing:0.191px">hcp</span><span style="letter-spacing:-0.213px">I</span><span style="letter-spacing:0.160px">nterface</span><span style="letter-spacing:-0.597px">O</span><span style="letter-spacing:0.158px">ptions</span></div>
<div class="t" style="left:222px;top:139px;height:19px;line-height:19px"><span style="display:inline-block;transform:scaleX(0.9063);transform-origin:0 0">REG_BINARY</span></div>
<div class="t" style="left:341px;top:139px;height:19px;line-height:19px;width:107px;overflow:hidden"><span style="letter-spacing:0.138px">fc</span><span style="letter-spacing:-0.407px"> </span><span style="letter-spacing:-0.397px">00</span><span style="letter-spacing:-0.407px"> </span><span style="letter-spacing:-0.397px">00</span><span style="letter-spacing:-0.407px"> </span><span style="letter-spacing:-0.397px">00</span><span style="letter-spacing:-0.407px"> </span><span style="letter-spacing:-0.397px">00</span><span style="letter-spacing:-0.407px"> </span><span style="letter-spacing:-0.397px">00</span><span style="letter-spacing:-0.407px"> </span><span style="letter-spacing:-0.397px">00</span><span style="letter-spacing:-0.407px"> </span><span style="letter-spacing:-0.397px">00</span><span style="letter-spacing:-0.407px"> </span><span style="letter-spacing:-0.397px">00</span><span style="letter-spacing:-0.407px"> </span><span style="letter-spacing:-0.397px">00</span></div>
<div class="t" style="left:18px;top:158px;height:19px;line-height:19px"><span style="letter-spacing:-0.554px">D</span><span style="letter-spacing:0.191px">hcp</span><span style="letter-spacing:-0.393px">IPA</span><span style="letter-spacing:0.178px">ddress</span></div>
<div class="t" style="left:222px;top:158px;height:19px;line-height:19px"><span style="display:inline-block;transform:scaleX(0.8215);transform-origin:0 0">REG_SZ</span></div>
<div class="t" style="left:341px;top:158px;height:19px;line-height:19px;width:107px;overflow:hidden"><span style="letter-spacing:-0.397px">192</span><span style="letter-spacing:-0.151px">.</span><span style="letter-spacing:-0.397px">168</span><span style="letter-spacing:-0.151px">.</span><span style="letter-spacing:-0.397px">1</span><span style="letter-spacing:-0.151px">.</span><span style="letter-spacing:-0.397px">2</span></div>
<div class="t" style="left:18px;top:177px;height:19px;line-height:19px"><span style="letter-spacing:-0.554px">D</span><span style="letter-spacing:0.191px">hcp</span><span style="letter-spacing:-0.554px">N</span><span style="letter-spacing:0.230px">ame</span><span style="letter-spacing:-0.512px">S</span><span style="letter-spacing:0.162px">erver</span></div>
<div class="t" style="left:222px;top:177px;height:19px;line-height:19px"><span style="display:inline-block;transform:scaleX(0.8215);transform-origin:0 0">REG_SZ</span></div>
<div class="t" style="left:341px;top:177px;height:19px;line-height:19px;width:107px;overflow:hidden"><span style="letter-spacing:-0.397px">192</span><span style="letter-spacing:-0.151px">.</span><span style="letter-spacing:-0.397px">168</span><span style="letter-spacing:-0.151px">.</span><span style="letter-spacing:-0.397px">1</span><span style="letter-spacing:-0.151px">.</span><span style="letter-spacing:-0.397px">1</span></div>
<div class="t" style="left:18px;top:196px;height:19px;line-height:19px"><span style="letter-spacing:-0.554px">D</span><span style="letter-spacing:0.191px">hcp</span><span style="letter-spacing:-0.554px">N</span><span style="letter-spacing:0.174px">etwork</span><span style="letter-spacing:-0.554px">H</span><span style="letter-spacing:0.125px">int</span></div>
<div class="t" style="left:222px;top:196px;height:19px;line-height:19px"><span style="display:inline-block;transform:scaleX(0.8215);transform-origin:0 0">REG_SZ</span></div>
<div class="t" style="left:341px;top:196px;height:19px;line-height:19px;width:107px;overflow:hidden"><span style="letter-spacing:-0.397px">144696479716</span></div>
<div class="t" style="left:18px;top:215px;height:19px;line-height:19px"><span style="letter-spacing:-0.554px">D</span><span style="letter-spacing:0.191px">hcp</span><span style="letter-spacing:-0.512px">S</span><span style="letter-spacing:0.162px">erver</span></div>
<div class="t" style="left:222px;top:215px;height:19px;line-height:19px"><span style="display:inline-block;transform:scaleX(0.8215);transform-origin:0 0">REG_SZ</span></div>
<div class="t" style="left:341px;top:215px;height:19px;line-height:19px;width:107px;overflow:hidden"><span style="letter-spacing:-0.397px">192</span><span style="letter-spacing:-0.151px">.</span><span style="letter-spacing:-0.397px">168</span><span style="letter-spacing:-0.151px">.</span><span style="letter-spacing:-0.397px">1</span><span style="letter-spacing:-0.151px">.</span><span style="letter-spacing:-0.397px">1</span></div>
<div class="t" style="left:18px;top:234px;height:19px;line-height:19px"><span style="letter-spacing:-0.554px">D</span><span style="letter-spacing:0.191px">hcp</span><span style="letter-spacing:-0.512px">S</span><span style="letter-spacing:0.178px">ubnet</span><span style="letter-spacing:-0.639px">M</span><span style="letter-spacing:0.184px">ask</span></div>
<div class="t" style="left:222px;top:234px;height:19px;line-height:19px"><span style="display:inline-block;transform:scaleX(0.8215);transform-origin:0 0">REG_SZ</span></div>
<div class="t" style="left:341px;top:234px;height:19px;line-height:19px;width:107px;overflow:hidden"><span style="letter-spacing:-0.397px">255</span><span style="letter-spacing:-0.151px">.</span><span style="letter-spacing:-0.397px">255</span><span style="letter-spacing:-0.151px">.</span><span style="letter-spacing:-0.397px">255</span><span style="letter-spacing:-0.151px">.</span><span style="letter-spacing:-0.397px">0</span></div>
<div class="t" style="left:18px;top:253px;height:19px;line-height:19px"><span style="letter-spacing:-0.554px">D</span><span style="letter-spacing:0.191px">hcp</span><span style="letter-spacing:-0.512px">S</span><span style="letter-spacing:0.178px">ubnet</span><span style="letter-spacing:-0.639px">M</span><span style="letter-spacing:0.184px">ask</span><span style="letter-spacing:-0.597px">O</span><span style="letter-spacing:0.148px">pt</span></div>
<div class="t" style="left:222px;top:253px;height:19px;line-height:19px"><span style="display:inline-block;transform:scaleX(0.9064);transform-origin:0 0">REG_MULTI_SZ</span></div>
<div class="t" style="left:341px;top:253px;height:19px;line-height:19px;width:107px;overflow:hidden"><span style="letter-spacing:-0.397px">255</span><span style="letter-spacing:-0.151px">.</span><span style="letter-spacing:-0.397px">255</span><span style="letter-spacing:-0.151px">.</span><span style="letter-spacing:-0.397px">255</span><span style="letter-spacing:-0.151px">.</span><span style="letter-spacing:-0.397px">0</span></div>
<div class="t" style="left:18px;top:272px;height:19px;line-height:19px"><span style="letter-spacing:-0.554px">D</span><span style="letter-spacing:0.194px">omain</span></div>
<div class="t" style="left:222px;top:272px;height:19px;line-height:19px"><span style="display:inline-block;transform:scaleX(0.8215);transform-origin:0 0">REG_SZ</span></div>
<div class="t" style="left:341px;top:272px;height:19px;line-height:19px;width:107px;overflow:hidden"></div>
<div class="t" style="left:18px;top:291px;height:19px;line-height:19px"><span style="letter-spacing:-0.512px">E</span><span style="letter-spacing:0.174px">nable</span><span style="letter-spacing:-0.543px">DHCP</span></div>
<div class="t" style="left:222px;top:291px;height:19px;line-height:19px"><span style="display:inline-block;transform:scaleX(0.9036);transform-origin:0 0">REG_DWORD</span></div>
<div class="t" style="left:341px;top:291px;height:19px;line-height:19px;width:107px;overflow:hidden"><span style="letter-spacing:-0.397px">0</span><span style="letter-spacing:0.178px">x</span><span style="letter-spacing:-0.397px">00000001</span><span style="letter-spacing:-0.407px"> </span><span style="letter-spacing:-0.182px">(</span><span style="letter-spacing:-0.397px">1</span><span style="letter-spacing:-0.182px">)</span></div>
<div class="t" style="left:18px;top:310px;height:19px;line-height:19px"><span style="letter-spacing:-0.213px">I</span><span style="letter-spacing:0.178px">s</span><span style="letter-spacing:-0.512px">S</span><span style="letter-spacing:0.162px">erver</span><span style="letter-spacing:-0.554px">N</span><span style="letter-spacing:0.198px">ap</span><span style="letter-spacing:-0.512px">A</span><span style="letter-spacing:0.193px">ware</span></div>
<div class="t" style="left:222px;top:310px;height:19px;line-height:19px"><span style="display:inline-block;transform:scaleX(0.9036);transform-origin:0 0">REG_DWORD</span></div>
<div class="t" style="left:341px;top:310px;height:19px;line-height:19px;width:107px;overflow:hidden"><span style="letter-spacing:-0.397px">0</span><span style="letter-spacing:0.178px">x</span><span style="letter-spacing:-0.397px">00000000</span><span style="letter-spacing:-0.407px"> </span><span style="letter-spacing:-0.182px">(</span><span style="letter-spacing:-0.397px">0</span><span style="letter-spacing:-0.182px">)</span></div>
<div class="t" style="left:18px;top:329px;height:19px;line-height:19px"><span style="letter-spacing:-0.427px">L</span><span style="letter-spacing:0.193px">ease</span></div>
<div class="t" style="left:222px;top:329px;height:19px;line-height:19px"><span style="display:inline-block;transform:scaleX(0.9036);transform-origin:0 0">REG_DWORD</span></div>
<div class="t" style="left:341px;top:329px;height:19px;line-height:19px;width:107px;overflow:hidden"><span style="letter-spacing:-0.397px">0</span><span style="letter-spacing:0.178px">x</span><span style="letter-spacing:-0.397px">00015180</span><span style="letter-spacing:-0.407px"> </span><span style="letter-spacing:-0.182px">(</span><span style="letter-spacing:-0.397px">86400</span><span style="letter-spacing:-0.182px">)</span></div>
<div class="t" style="left:18px;top:348px;height:19px;line-height:19px"><span style="letter-spacing:-0.427px">L</span><span style="letter-spacing:0.193px">ease</span><span style="letter-spacing:-0.597px">O</span><span style="letter-spacing:0.167px">btained</span><span style="letter-spacing:-0.469px">T</span><span style="letter-spacing:0.191px">ime</span></div>
<div class="t" style="left:222px;top:348px;height:19px;line-height:19px"><span style="display:inline-block;transform:scaleX(0.9036);transform-origin:0 0">REG_DWORD</span></div>
<div class="t" style="left:341px;top:348px;height:19px;line-height:19px;width:107px;overflow:hidden"><span style="letter-spacing:-0.397px">0</span><span style="letter-spacing:0.178px">x</span><span style="letter-spacing:-0.397px">001904</span><span style="letter-spacing:0.178px">c</span><span style="letter-spacing:-0.397px">4</span><span style="letter-spacing:-0.407px"> </span><span style="letter-spacing:-0.182px">(</span><span style="letter-spacing:-0.397px">1639620</span><span style="letter-spacing:-0.182px">)</span></div>
<div class="t" style="left:18px;top:367px;height:19px;line-height:19px"><span style="letter-spacing:-0.427px">L</span><span style="letter-spacing:0.193px">ease</span><span style="letter-spacing:-0.469px">T</span><span style="letter-spacing:0.173px">erminates</span><span style="letter-spacing:-0.469px">T</span><span style="letter-spacing:0.191px">ime</span></div>
<div class="t" style="left:222px;top:367px;height:19px;line-height:19px"><span style="display:inline-block;transform:scaleX(0.9036);transform-origin:0 0">REG_DWORD</span></div>
<div class="t" style="left:341px;top:367px;height:19px;line-height:19px;width:107px;overflow:hidden"><span style="letter-spacing:-0.397px">0</span><span style="letter-spacing:0.178px">x</span><span style="letter-spacing:-0.397px">001</span><span style="letter-spacing:0.198px">a</span><span style="letter-spacing:-0.397px">5644</span><span style="letter-spacing:-0.407px"> </span><span style="letter-spacing:-0.182px">(</span><span style="letter-spacing:-0.397px">1726020</span><span style="letter-spacing:-0.182px">)</span></div>
<div class="t" style="left:18px;top:386px;height:19px;line-height:19px"><span style="letter-spacing:-0.554px">MTU</span></div>
<div class="t" style="left:222px;top:386px;height:19px;line-height:19px"><span style="display:inline-block;transform:scaleX(0.9036);transform-origin:0 0">REG_DWORD</span></div>
<div class="t" style="left:341px;top:386px;height:19px;line-height:19px;width:107px;overflow:hidden"><span style="letter-spacing:-0.397px">0</span><span style="letter-spacing:0.178px">x</span><span style="letter-spacing:-0.397px">00000000</span><span style="letter-spacing:-0.407px"> </span><span style="letter-spacing:-0.182px">(</span><span style="letter-spacing:-0.397px">0</span><span style="letter-spacing:-0.182px">)</span></div>
<div class="t" style="left:18px;top:405px;height:19px;line-height:19px"><span style="letter-spacing:-0.554px">N</span><span style="letter-spacing:0.230px">ame</span><span style="letter-spacing:-0.512px">S</span><span style="letter-spacing:0.162px">erver</span></div>
<div class="t" style="left:222px;top:405px;height:19px;line-height:19px"><span style="display:inline-block;transform:scaleX(0.8215);transform-origin:0 0">REG_SZ</span></div>
<div class="t" style="left:341px;top:405px;height:19px;line-height:19px;width:107px;overflow:hidden"><span style="letter-spacing:-0.397px">8</span><span style="letter-spacing:-0.151px">.</span><span style="letter-spacing:-0.397px">8</span><span style="letter-spacing:-0.151px">.</span><span style="letter-spacing:-0.397px">8</span><span style="letter-spacing:-0.151px">.</span><span style="letter-spacing:-0.397px">8</span><span style="letter-spacing:-0.151px">,</span><span style="letter-spacing:-0.397px">8</span><span style="letter-spacing:-0.151px">.</span><span style="letter-spacing:-0.397px">8</span><span style="letter-spacing:-0.151px">.</span><span style="letter-spacing:-0.397px">4</span><span style="letter-spacing:-0.151px">.</span><span style="letter-spacing:-0.397px">4</span></div>
<div class="t" style="left:18px;top:424px;height:19px;line-height:19px"><span style="letter-spacing:-0.554px">R</span><span style="letter-spacing:0.152px">egister</span><span style="letter-spacing:-0.512px">A</span><span style="letter-spacing:0.168px">dapter</span><span style="letter-spacing:-0.554px">N</span><span style="letter-spacing:0.230px">ame</span></div>
<div class="t" style="left:222px;top:424px;height:19px;line-height:19px"><span style="display:inline-block;transform:scaleX(0.9036);transform-origin:0 0">REG_DWORD</span></div>
<div class="t" style="left:341px;top:424px;height:19px;line-height:19px;width:107px;overflow:hidden"><span style="letter-spacing:-0.397px">0</span><span style="letter-spacing:0.178px">x</span><span style="letter-spacing:-0.397px">00000000</span><span style="letter-spacing:-0.407px"> </span><span style="letter-spacing:-0.182px">(</span><span style="letter-spacing:-0.397px">0</span><span style="letter-spacing:-0.182px">)</span></div>
<div class="t" style="left:18px;top:443px;height:19px;line-height:19px"><span style="letter-spacing:-0.554px">R</span><span style="letter-spacing:0.149px">egistration</span><span style="letter-spacing:-0.512px">E</span><span style="letter-spacing:0.178px">nabled</span></div>
<div class="t" style="left:222px;top:443px;height:19px;line-height:19px"><span style="display:inline-block;transform:scaleX(0.9036);transform-origin:0 0">REG_DWORD</span></div>
<div class="t" style="left:341px;top:443px;height:19px;line-height:19px;width:107px;overflow:hidden"><span style="letter-spacing:-0.397px">0</span><span style="letter-spacing:0.178px">x</span><span style="letter-spacing:-0.397px">00000001</span><span style="letter-spacing:-0.407px"> </span><span style="letter-spacing:-0.182px">(</span><span style="letter-spacing:-0.397px">1</span><span style="letter-spacing:-0.182px">)</span></div>
<svg width="449" height="464" style="left:0;top:0"><path d="M0 25.5 H11.5" stroke="#b8b8b8" stroke-width="1" fill="none"/><path d="M11 25.5 L14.5 29 V40.5 L12.5 39 Q10 37.5 8 38.5 Q5.5 39.5 3.5 38.5 Q1.5 37.2 0 37.5" stroke="#8c8c8c" stroke-width="1" fill="none"/><path d="M11.5 26 V28.5 H14" stroke="#c8c8c8" stroke-width="1" fill="none"/><text x="0.8" y="35" font-family="Liberation Sans" font-weight="bold" font-size="9.4" fill="#c65a1a" stroke="#c65a1a" stroke-width="0.35">ab</text><path d="M0 44.5 H11.5" stroke="#b8b8b8" stroke-width="1" fill="none"/><path d="M11 44.5 L14.5 48 V59.5 L12.5 58 Q10 56.5 8 57.5 Q5.5 58.5 3.5 57.5 Q1.5 56.2 0 56.5" stroke="#8c8c8c" stroke-width="1" fill="none"/><path d="M11.5 45 V47.5 H14" stroke="#c8c8c8" stroke-width="1" fill="none"/><rect x="1.6" y="47.6" width="3.8" height="2.8" rx="1.4" fill="none" stroke="#1646e6" stroke-width="1.3"/><rect x="7" y="47" width="1.8" height="4" fill="#1646e6"/><rect x="10" y="47" width="1.8" height="4" fill="#1646e6"/><rect x="2.2" y="52.2" width="1.8" height="3.8" fill="#1646e6"/><rect x="5" y="52.2" width="1.8" height="3.8" fill="#1646e6"/><rect x="8.6" y="52.8" width="3.8" height="2.8" rx="1.4" fill="none" stroke="#1646e6" stroke-width="1.3"/><path d="M0 63.5 H11.5" stroke="#b8b8b8" stroke-width="1" fill="none"/><path d="M11 63.5 L14.5 67 V78.5 L12.5 77 Q10 75.5 8 76.5 Q5.5 77.5 3.5 76.5 Q1.5 75.2 0 75.5" stroke="#8c8c8c" stroke-width="1" fill="none"/><path d="M11.5 64 V66.5 H14" stroke="#c8c8c8" stroke-width="1" fill="none"/><rect x="1.6" y="66.6" width="3.8" height="2.8" rx="1.4" fill="none" stroke="#1646e6" stroke-width="1.3"/><rect x="7" y="66" width="1.8" height="4" fill="#1646e6"/><rect x="10" y="66" width="1.8" height="4" fill="#1646e6"/><rect x="2.2" y="71.2" width="1.8" height="3.8" fill="#1646e6"/><rect x="5" y="71.2" width="1.8" height="3.8" fill="#1646e6"/><rect x="8.6" y="71.8" width="3.8" height="2.8" rx="1.4" fill="none" stroke="#1646e6" stroke-width="1.3"/><path d="M0 82.5 H11.5" stroke="#b8b8b8" stroke-width="1" fill="none"/><path d="M11 82.5 L14.5 86 V97.5 L12.5 96 Q10 94.5 8 95.5 Q5.5 96.5 3.5 95.5 Q1.5 94.2 0 94.5" stroke="#8c8c8c" stroke-width="1" fill="none"/><path d="M11.5 83 V85.5 H14" stroke="#c8c8c8" stroke-width="1" fill="none"/><text x="0.8" y="92" font-family="Liberation Sans" font-weight="bold" font-size="9.4" fill="#c65a1a" stroke="#c65a1a" stroke-width="0.35">ab</text><path d="M0 101.5 H11.5" stroke="#b8b8b8" stroke-width="1" fill="none"/><path d="M11 101.5 L14.5 105 V116.5 L12.5 115 Q10 113.5 8 114.5 Q5.5 115.5 3.5 114.5 Q1.5 113.2 0 113.5" stroke="#8c8c8c" stroke-width="1" fill="none"/><path d="M11.5 102 V104.5 H14" stroke="#c8c8c8" stroke-width="1" fill="none"/><rect x="1.6" y="104.6" width="3.8" height="2.8" rx="1.4" fill="none" stroke="#1646e6" stroke-width="1.3"/><rect x="7" y="104" width="1.8" height="4" fill="#1646e6"/><rect x="10" y="104" width="1.8" height="4" fill="#1646e6"/><rect x="2.2" y="109.2" width="1.8" height="3.8" fill="#1646e6"/><rect x="5" y="109.2" width="1.8" height="3.8" fill="#1646e6"/><rect x="8.6" y="109.8" width="3.8" height="2.8" rx="1.4" fill="none" stroke="#1646e6" stroke-width="1.3"/><path d="M0 120.5 H11.5" stroke="#b8b8b8" stroke-width="1" fill="none"/><path d="M11 120.5 L14.5 124 V135.5 L12.5 134 Q10 132.5 8 133.5 Q5.5 134.5 3.5 133.5 Q1.5 132.2 0 132.5" stroke="#8c8c8c" stroke-width="1" fill="none"/><path d="M11.5 121 V123.5 H14" stroke="#c8c8c8" stroke-width="1" fill="none"/><rect x="1.6" y="123.6" width="3.8" height="2.8" rx="1.4" fill="none" stroke="#1646e6" stroke-width="1.3"/><rect x="7" y="123" width="1.8" height="4" fill="#1646e6"/><rect x="10" y="123" width="1.8" height="4" fill="#1646e6"/><rect x="2.2" y="128.2" width="1.8" height="3.8" fill="#1646e6"/><rect x="5" y="128.2" width="1.8" height="3.8" fill="#1646e6"/><rect x="8.6" y="128.8" width="3.8" height="2.8" rx="1.4" fill="none" stroke="#1646e6" stroke-width="1.3"/><path d="M0 139.5 H11.5" stroke="#b8b8b8" stroke-width="1" fill="none"/><path d="M11 139.5 L14.5 143 V154.5 L12.5 153 Q10 151.5 8 152.5 Q5.5 153.5 3.5 152.5 Q1.5 151.2 0 151.5" stroke="#8c8c8c" stroke-width="1" fill="none"/><path d="M11.5 140 V142.5 H14" stroke="#c8c8c8" stroke-width="1" fill="none"/><rect x="1.6" y="142.6" width="3.8" height="2.8" rx="1.4" fill="none" stroke="#1646e6" stroke-width="1.3"/><rect x="7" y="142" width="1.8" height="4" fill="#1646e6"/><rect x="10" y="142" width="1.8" height="4" fill="#1646e6"/><rect x="2.2" y="147.2" width="1.8" height="3.8" fill="#1646e6"/><rect x="5" y="147.2" width="1.8" height="3.8" fill="#1646e6"/><rect x="8.6" y="147.8" width="3.8" height="2.8" rx="1.4" fill="none" stroke="#1646e6" stroke-width="1.3"/><path d="M0 158.5 H11.5" stroke="#b8b8b8" stroke-width="1" fill="none"/><path d="M11 158.5 L14.5 162 V173.5 L12.5 172 Q10 170.5 8 171.5 Q5.5 172.5 3.5 171.5 Q1.5 170.2 0 170.5" stroke="#8c8c8c" stroke-width="1" fill="none"/><path d="M11.5 159 V161.5 H14" stroke="#c8c8c8" stroke-width="1" fill="none"/><text x="0.8" y="168" font-family="Liberation Sans" font-weight="bold" font-size="9.4" fill="#c65a1a" stroke="#c65a1a" stroke-width="0.35">ab</text><path d="M0 177.5 H11.5" stroke="#b8b8b8" stroke-width="1" fill="none"/><path d="M11 177.5 L14.5 181 V192.5 L12.5 191 Q10 189.5 8 190.5 Q5.5 191.5 3.5 190.5 Q1.5 189.2 0 189.5" stroke="#8c8c8c" stroke-width="1" fill="none"/><path d="M11.5 178 V180.5 H14" stroke="#c8c8c8" stroke-width="1" fill="none"/><text x="0.8" y="187" font-family="Liberation Sans" font-weight="bold" font-size="9.4" fill="#c65a1a" stroke="#c65a1a" stroke-width="0.35">ab</text><path d="M0 196.5 H11.5" stroke="#b8b8b8" stroke-width="1" fill="none"/><path d="M11 196.5 L14.5 200 V211.5 L12.5 210 Q10 208.5 8 209.5 Q5.5 210.5 3.5 209.5 Q1.5 208.2 0 208.5" stroke="#8c8c8c" stroke-width="1" fill="none"/><path d="M11.5 197 V199.5 H14" stroke="#c8c8c8" stroke-width="1" fill="none"/><text x="0.8" y="206" font-family="Liberation Sans" font-weight="bold" font-size="9.4" fill="#c65a1a" stroke="#c65a1a" stroke-width="0.35">ab</text><path d="M0 215.5 H11.5" stroke="#b8b8b8" stroke-width="1" fill="none"/><path d="M11 215.5 L14.5 219 V230.5 L12.5 229 Q10 227.5 8 228.5 Q5.5 229.5 3.5 228.5 Q1.5 227.2 0 227.5" stroke="#8c8c8c" stroke-width="1" fill="none"/><path d="M11.5 216 V218.5 H14" stroke="#c8c8c8" stroke-width="1" fill="none"/><text x="0.8" y="225" font-family="Liberation Sans" font-weight="bold" font-size="9.4" fill="#c65a1a" stroke="#c65a1a" stroke-width="0.35">ab</text><path d="M0 234.5 H11.5" stroke="#b8b8b8" stroke-width="1" fill="none"/><path d="M11 234.5 L14.5 238 V249.5 L12.5 248 Q10 246.5 8 247.5 Q5.5 248.5 3.5 247.5 Q1.5 246.2 0 246.5" stroke="#8c8c8c" stroke-width="1" fill="none"/><path d="M11.5 235 V237.5 H14" stroke="#c8c8c8" stroke-width="1" fill="none"/><text x="0.8" y="244" font-family="Liberation Sans" font-weight="bold" font-size="9.4" fill="#c65a1a" stroke="#c65a1a" stroke-width="0.35">ab</text><path d="M0 253.5 H11.5" stroke="#b8b8b8" stroke-width="1" fill="none"/><path d="M11 253.5 L14.5 257 V268.5 L12.5 267 Q10 265.5 8 266.5 Q5.5 267.5 3.5 266.5 Q1.5 265.2 0 265.5" stroke="#8c8c8c" stroke-width="1" fill="none"/><path d="M11.5 254 V256.5 H14" stroke="#c8c8c8" stroke-width="1" fill="none"/><text x="0.8" y="263" font-family="Liberation Sans" font-weight="bold" font-size="9.4" fill="#c65a1a" stroke="#c65a1a" stroke-width="0.35">ab</text><path d="M0 272.5 H11.5" stroke="#b8b8b8" stroke-width="1" fill="none"/><path d="M11 272.5 L14.5 276 V287.5 L12.5 286 Q10 284.5 8 285.5 Q5.5 286.5 3.5 285.5 Q1.5 284.2 0 284.5" stroke="#8c8c8c" stroke-width="1" fill="none"/><path d="M11.5 273 V275.5 H14" stroke="#c8c8c8" stroke-width="1" fill="none"/><text x="0.8" y="282" font-family="Liberation Sans" font-weight="bold" font-size="9.4" fill="#c65a1a" stroke="#c65a1a" stroke-width="0.35">ab</text><path d="M0 291.5 H11.5" stroke="#b8b8b8" stroke-width="1" fill="none"/><path d="M11 291.5 L14.5 295 V306.5 L12.5 305 Q10 303.5 8 304.5 Q5.5 305.5 3.5 304.5 Q1.5 303.2 0 303.5" stroke="#8c8c8c" stroke-width="1" fill="none"/><path d="M11.5 292 V294.5 H14" stroke="#c8c8c8" stroke-width="1" fill="none"/><rect x="1.6" y="294.6" width="3.8" height="2.8" rx="1.4" fill="none" stroke="#1646e6" stroke-width="1.3"/><rect x="7" y="294" width="1.8" height="4" fill="#1646e6"/><rect x="10" y="294" width="1.8" height="4" fill="#1646e6"/><rect x="2.2" y="299.2" width="1.8" height="3.8" fill="#1646e6"/><rect x="5" y="299.2" width="1.8" height="3.8" fill="#1646e6"/><rect x="8.6" y="299.8" width="3.8" height="2.8" rx="1.4" fill="none" stroke="#1646e6" stroke-width="1.3"/><path d="M0 310.5 H11.5" stroke="#b8b8b8" stroke-width="1" fill="none"/><path d="M11 310.5 L14.5 314 V325.5 L12.5 324 Q10 322.5 8 323.5 Q5.5 324.5 3.5 323.5 Q1.5 322.2 0 322.5" stroke="#8c8c8c" stroke-width="1" fill="none"/><path d="M11.5 311 V313.5 H14" stroke="#c8c8c8" stroke-width="1" fill="none"/><rect x="1.6" y="313.6" width="3.8" height="2.8" rx="1.4" fill="none" stroke="#1646e6" stroke-width="1.3"/><rect x="7" y="313" width="1.8" height="4" fill="#1646e6"/><rect x="10" y="313" width="1.8" height="4" fill="#1646e6"/><rect x="2.2" y="318.2" width="1.8" height="3.8" fill="#1646e6"/><rect x="5" y="318.2" width="1.8" height="3.8" fill="#1646e6"/><rect x="8.6" y="318.8" width="3.8" height="2.8" rx="1.4" fill="none" stroke="#1646e6" stroke-width="1.3"/><path d="M0 329.5 H11.5" stroke="#b8b8b8" stroke-width="1" fill="none"/><path d="M11 329.5 L14.5 333 V344.5 L12.5 343 Q10 341.5 8 342.5 Q5.5 343.5 3.5 342.5 Q1.5 341.2 0 341.5" stroke="#8c8c8c" stroke-width="1" fill="none"/><path d="M11.5 330 V332.5 H14" stroke="#c8c8c8" stroke-width="1" fill="none"/><rect x="1.6" y="332.6" width="3.8" height="2.8" rx="1.4" fill="none" stroke="#1646e6" stroke-width="1.3"/><rect x="7" y="332" width="1.8" height="4" fill="#1646e6"/><rect x="10" y="332" width="1.8" height="4" fill="#1646e6"/><rect x="2.2" y="337.2" width="1.8" height="3.8" fill="#1646e6"/><rect x="5" y="337.2" width="1.8" height="3.8" fill="#1646e6"/><rect x="8.6" y="337.8" width="3.8" height="2.8" rx="1.4" fill="none" stroke="#1646e6" stroke-width="1.3"/><path d="M0 348.5 H11.5" stroke="#b8b8b8" stroke-width="1" fill="none"/><path d="M11 348.5 L14.5 352 V363.5 L12.5 362 Q10 360.5 8 361.5 Q5.5 362.5 3.5 361.5 Q1.5 360.2 0 360.5" stroke="#8c8c8c" stroke-width="1" fill="none"/><path d="M11.5 349 V351.5 H14" stroke="#c8c8c8" stroke-width="1" fill="none"/><rect x="1.6" y="351.6" width="3.8" height="2.8" rx="1.4" fill="none" stroke="#1646e6" stroke-width="1.3"/><rect x="7" y="351" width="1.8" height="4" fill="#1646e6"/><rect x="10" y="351" width="1.8" height="4" fill="#1646e6"/><rect x="2.2" y="356.2" width="1.8" height="3.8" fill="#1646e6"/><rect x="5" y="356.2" width="1.8" height="3.8" fill="#1646e6"/><rect x="8.6" y="356.8" width="3.8" height="2.8" rx="1.4" fill="none" stroke="#1646e6" stroke-width="1.3"/><path d="M0 367.5 H11.5" stroke="#b8b8b8" stroke-width="1" fill="none"/><path d="M11 367.5 L14.5 371 V382.5 L12.5 381 Q10 379.5 8 380.5 Q5.5 381.5 3.5 380.5 Q1.5 379.2 0 379.5" stroke="#8c8c8c" stroke-width="1" fill="none"/><path d="M11.5 368 V370.5 H14" stroke="#c8c8c8" stroke-width="1" fill="none"/><rect x="1.6" y="370.6" width="3.8" height="2.8" rx="1.4" fill="none" stroke="#1646e6" stroke-width="1.3"/><rect x="7" y="370" width="1.8" height="4" fill="#1646e6"/><rect x="10" y="370" width="1.8" height="4" fill="#1646e6"/><rect x="2.2" y="375.2" width="1.8" height="3.8" fill="#1646e6"/><rect x="5" y="375.2" width="1.8" height="3.8" fill="#1646e6"/><rect x="8.6" y="375.8" width="3.8" height="2.8" rx="1.4" fill="none" stroke="#1646e6" stroke-width="1.3"/><path d="M0 386.5 H11.5" stroke="#b8b8b8" stroke-width="1" fill="none"/><path d="M11 386.5 L14.5 390 V401.5 L12.5 400 Q10 398.5 8 399.5 Q5.5 400.5 3.5 399.5 Q1.5 398.2 0 398.5" stroke="#8c8c8c" stroke-width="1" fill="none"/><path d="M11.5 387 V389.5 H14" stroke="#c8c8c8" stroke-width="1" fill="none"/><rect x="1.6" y="389.6" width="3.8" height="2.8" rx="1.4" fill="none" stroke="#1646e6" stroke-width="1.3"/><rect x="7" y="389" width="1.8" height="4" fill="#1646e6"/><rect x="10" y="389" width="1.8" height="4" fill="#1646e6"/><rect x="2.2" y="394.2" width="1.8" height="3.8" fill="#1646e6"/><rect x="5" y="394.2" width="1.8" height="3.8" fill="#1646e6"/><rect x="8.6" y="394.8" width="3.8" height="2.8" rx="1.4" fill="none" stroke="#1646e6" stroke-width="1.3"/><path d="M0 405.5 H11.5" stroke="#b8b8b8" stroke-width="1" fill="none"/><path d="M11 405.5 L14.5 409 V420.5 L12.5 419 Q10 417.5 8 418.5 Q5.5 419.5 3.5 418.5 Q1.5 417.2 0 417.5" stroke="#8c8c8c" stroke-width="1" fill="none"/><path d="M11.5 406 V408.5 H14" stroke="#c8c8c8" stroke-width="1" fill="none"/><text x="0.8" y="415" font-family="Liberation Sans" font-weight="bold" font-size="9.4" fill="#c65a1a" stroke="#c65a1a" stroke-width="0.35">ab</text><path d="M0 424.5 H11.5" stroke="#b8b8b8" stroke-width="1" fill="none"/><path d="M11 424.5 L14.5 428 V439.5 L12.5 438 Q10 436.5 8 437.5 Q5.5 438.5 3.5 437.5 Q1.5 436.2 0 436.5" stroke="#8c8c8c" stroke-width="1" fill="none"/><path d="M11.5 425 V427.5 H14" stroke="#c8c8c8" stroke-width="1" fill="none"/><rect x="1.6" y="427.6" width="3.8" height="2.8" rx="1.4" fill="none" stroke="#1646e6" stroke-width="1.3"/><rect x="7" y="427" width="1.8" height="4" fill="#1646e6"/><rect x="10" y="427" width="1.8" height="4" fill="#1646e6"/><rect x="2.2" y="432.2" width="1.8" height="3.8" fill="#1646e6"/><rect x="5" y="432.2" width="1.8" height="3.8" fill="#1646e6"/><rect x="8.6" y="432.8" width="3.8" height="2.8" rx="1.4" fill="none" stroke="#1646e6" stroke-width="1.3"/><path d="M0 443.5 H11.5" stroke="#b8b8b8" stroke-width="1" fill="none"/><path d="M11 443.5 L14.5 447 V458.5 L12.5 457 Q10 455.5 8 456.5 Q5.5 457.5 3.5 456.5 Q1.5 455.2 0 455.5" stroke="#8c8c8c" stroke-width="1" fill="none"/><path d="M11.5 444 V446.5 H14" stroke="#c8c8c8" stroke-width="1" fill="none"/><rect x="1.6" y="446.6" width="3.8" height="2.8" rx="1.4" fill="none" stroke="#1646e6" stroke-width="1.3"/><rect x="7" y="446" width="1.8" height="4" fill="#1646e6"/><rect x="10" y="446" width="1.8" height="4" fill="#1646e6"/><rect x="2.2" y="451.2" width="1.8" height="3.8" fill="#1646e6"/><rect x="5" y="451.2" width="1.8" height="3.8" fill="#1646e6"/><rect x="8.6" y="451.8" width="3.8" height="2.8" rx="1.4" fill="none" stroke="#1646e6" stroke-width="1.3"/></svg>
</div>
<div style="position:absolute;left:697px;top:74px;width:16px;height:463px;background:#f0f0f0;"></div>
<div style="position:absolute;left:697px;top:91px;width:15px;height:379px;background:#cdcdcd;"></div>
<div style="position:absolute;left:249px;top:537px;width:448px;height:16px;background:#f0f0f0;"></div>
<div style="position:absolute;left:269px;top:537px;width:294px;height:15px;background:#cdcdcd;"></div>
<div style="position:absolute;left:697px;top:537px;width:16px;height:16px;background:#f0f0f0;"></div>
<div style="position:absolute;left:713px;top:72px;width:1px;height:482px;background:#fff;"></div>
<svg width="716" height="556" style="left:0;top:0"><g fill="none" stroke="#606060" stroke-width="1.9">
<path d="M701.8 85 L704.8 81.7 L707.8 85"/>
<path d="M702 526 L705.2 529.5 L708.4 526"/>
<path d="M259 541.3 L255.2 544.5 L259 547.7"/>
<path d="M685.8 541.3 L689.6 544.5 L685.8 547.7"/>
</g><g fill="#bdbdbd">
<rect x="709" y="543" width="2" height="2"/><rect x="706" y="546" width="2" height="2"/><rect x="709" y="546" width="2" height="2"/>
<rect x="703" y="549" width="2" height="2"/><rect x="706" y="549" width="2" height="2"/><rect x="709" y="549" width="2" height="2"/>
</g></svg>
<div style="position:absolute;left:126px;top:198px;width:175px;height:203px;background:rgba(0,0,0,0.38);filter:blur(1px)"></div>
<div style="position:absolute;left:124px;top:196px;width:175px;height:203px;box-sizing:border-box;border:1px solid #cccccc;background:#f2f2f2"></div>
<div class="t" style="left:159.5px;top:199px;height:22px;line-height:22px;font-weight:bold;"><span style="display:inline-block;transform:scaleX(0.9500);transform-origin:0 0">Expand</span></div>
<div style="position:absolute;left:127px;top:221px;width:169px;height:22px;background:#91c9f7"></div>
<div class="t" style="left:159.5px;top:221px;height:22px;line-height:22px;"><span style="letter-spacing:-0.554px">N</span><span style="letter-spacing:0.227px">ew</span></div>
<svg width="716" height="556" style="left:0;top:0"><path d="M283 228.5 L286.5 232 L283 235.5" fill="none" stroke="#333" stroke-width="1.2"/></svg>
<div class="t" style="left:159.5px;top:243px;height:22px;line-height:22px;"><span style="letter-spacing:-0.469px">F</span><span style="letter-spacing:0.158px">ind</span><span style="letter-spacing:-0.151px">...</span></div>
<div style="position:absolute;left:155px;top:268px;width:141px;height:1px;background:#d7d7d7"></div>
<div class="t" style="left:159.5px;top:272px;height:22px;line-height:22px;"><span style="letter-spacing:-0.554px">D</span><span style="letter-spacing:0.154px">elete</span></div>
<div class="t" style="left:159.5px;top:294px;height:22px;line-height:22px;"><span style="letter-spacing:-0.554px">R</span><span style="letter-spacing:0.217px">ename</span></div>
<div style="position:absolute;left:155px;top:319px;width:141px;height:1px;background:#d7d7d7"></div>
<div class="t" style="left:159.5px;top:323px;height:22px;line-height:22px;"><span style="letter-spacing:-0.512px">E</span><span style="letter-spacing:0.158px">xport</span></div>
<div class="t" style="left:159.5px;top:345px;height:22px;line-height:22px;"><span style="letter-spacing:-0.512px">P</span><span style="letter-spacing:0.170px">ermissions</span><span style="letter-spacing:-0.151px">...</span></div>
<div style="position:absolute;left:155px;top:370px;width:141px;height:1px;background:#d7d7d7"></div>
<div class="t" style="left:159.5px;top:374px;height:22px;line-height:22px;"><span style="letter-spacing:-0.554px">C</span><span style="letter-spacing:0.191px">opy</span><span style="letter-spacing:-0.407px"> </span><span style="letter-spacing:-0.512px">K</span><span style="letter-spacing:0.188px">ey</span><span style="letter-spacing:-0.407px"> </span><span style="letter-spacing:-0.554px">N</span><span style="letter-spacing:0.230px">ame</span></div>
<div style="position:absolute;left:295px;top:220px;width:216px;height:167px;background:rgba(0,0,0,0.38);filter:blur(1px)"></div>
<div style="position:absolute;left:293px;top:218px;width:216px;height:167px;box-sizing:border-box;border:1px solid #cccccc;background:#f2f2f2"></div>
<div class="t" style="left:329px;top:221px;height:22px;line-height:22px;"><span style="letter-spacing:-0.512px">K</span><span style="letter-spacing:0.188px">ey</span></div>
<div style="position:absolute;left:324px;top:246px;width:182px;height:1px;background:#d7d7d7"></div>
<div class="t" style="left:329px;top:250px;height:22px;line-height:22px;"><span style="letter-spacing:-0.512px">S</span><span style="letter-spacing:0.138px">tring</span><span style="letter-spacing:-0.407px"> </span><span style="letter-spacing:-0.512px">V</span><span style="letter-spacing:0.168px">alue</span></div>
<div class="t" style="left:329px;top:272px;height:22px;line-height:22px;"><span style="letter-spacing:-0.512px">B</span><span style="letter-spacing:0.154px">inary</span><span style="letter-spacing:-0.407px"> </span><span style="letter-spacing:-0.512px">V</span><span style="letter-spacing:0.168px">alue</span></div>
<div style="position:absolute;left:296px;top:294px;width:210px;height:22px;background:#91c9f7"></div>
<div class="t" style="left:329px;top:294px;height:22px;line-height:22px;"><span style="letter-spacing:-0.596px">DWORD</span><span style="letter-spacing:-0.407px"> </span><span style="letter-spacing:-0.182px">(</span><span style="letter-spacing:-0.397px">32</span><span style="letter-spacing:-0.182px">-</span><span style="letter-spacing:0.125px">bit</span><span style="letter-spacing:-0.182px">)</span><span style="letter-spacing:-0.407px"> </span><span style="letter-spacing:-0.512px">V</span><span style="letter-spacing:0.168px">alue</span></div>
<div class="t" style="left:329px;top:316px;height:22px;line-height:22px;"><span style="letter-spacing:-0.605px">QWORD</span><span style="letter-spacing:-0.407px"> </span><span style="letter-spacing:-0.182px">(</span><span style="letter-spacing:-0.397px">64</span><span style="letter-spacing:-0.182px">-</span><span style="letter-spacing:0.125px">bit</span><span style="letter-spacing:-0.182px">)</span><span style="letter-spacing:-0.407px"> </span><span style="letter-spacing:-0.512px">V</span><span style="letter-spacing:0.168px">alue</span></div>
<div class="t" style="left:329px;top:338px;height:22px;line-height:22px;"><span style="letter-spacing:-0.639px">M</span><span style="letter-spacing:0.114px">ulti</span><span style="letter-spacing:-0.182px">-</span><span style="letter-spacing:-0.512px">S</span><span style="letter-spacing:0.138px">tring</span><span style="letter-spacing:-0.407px"> </span><span style="letter-spacing:-0.512px">V</span><span style="letter-spacing:0.168px">alue</span></div>
<div class="t" style="left:329px;top:360px;height:22px;line-height:22px;"><span style="letter-spacing:-0.512px">E</span><span style="letter-spacing:0.182px">xpandable</span><span style="letter-spacing:-0.407px"> </span><span style="letter-spacing:-0.512px">S</span><span style="letter-spacing:0.138px">tring</span><span style="letter-spacing:-0.407px"> </span><span style="letter-spacing:-0.512px">V</span><span style="letter-spacing:0.168px">alue</span></div>
</div></body></html>
